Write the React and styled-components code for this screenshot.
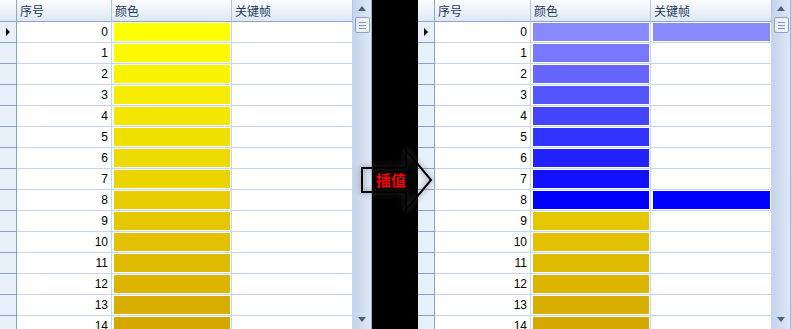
import React from 'react'
import styled, { createGlobalStyle } from 'styled-components'

const GlobalStyle = createGlobalStyle`
  html, body {
    margin: 0;
    padding: 0;
    background: #fff;
  }
  * { box-sizing: border-box; }
`

const Page = styled.div`
  position: relative;
  width: 791px;
  height: 329px;
  overflow: hidden;
  display: flex;
  font-family: "Liberation Sans", "Noto Sans CJK SC", sans-serif;
`

const Divider = styled.div`
  width: 46px;
  background: #000;
`

// Grid
const Grid = styled.div`
  width: ${p => p.$width}px;
  display: flex;
  background: #fff;
`

const Table = styled.div`
  flex: 1;
  display: flex;
  flex-direction: column;
`

const Row = styled.div`
  display: grid;
  grid-template-columns: 17px ${p => p.$first}px 120px 121px;
  height: ${p => p.$head ? 22 : 21}px;
  flex-shrink: 0;
`

const HeadCell = styled.div`
  background: linear-gradient(to bottom, #fbfcfe 0%, #eef3fa 45%, #dde8f5 100%);
  border-bottom: 1px solid #8fa6c6;
  border-right: 1px solid #b4c7de;
  color: #1e395b;
  font-family: "Noto Sans CJK SC", sans-serif;
  font-size: 12px;
  line-height: 21px;
  padding-left: 3px;
  white-space: nowrap;
  overflow: hidden;
`

const Corner = styled(HeadCell)`
  border-right: 1px solid #8fa6c6;
`

const RowHeader = styled.div`
  background: #e8f0fa;
  border-right: 1px solid #8aa2c4;
  border-bottom: 1px solid #8aa2c4;
  display: flex;
  align-items: center;
  padding-left: 6px;
`

const Pointer = styled.div`
  width: 0;
  height: 0;
  border-top: 4px solid transparent;
  border-bottom: 4px solid transparent;
  border-left: 4px solid #000;
`

const NumCell = styled.div`
  border-right: 1px solid #c5d7ef;
  border-bottom: 1px solid #c5d7ef;
  text-align: right;
  padding-right: 3px;
  font-size: 12px;
  line-height: 20px;
  color: #000;
`

const SwatchCell = styled.div`
  border-right: 1px solid #c5d7ef;
  border-bottom: 1px solid #c5d7ef;
  padding: 1px 1px 1px 2px;
`

const Swatch = styled.div`
  height: 100%;
  background: ${p => p.$color};
`

// Scrollbar
const Scrollbar = styled.div`
  width: 19px;
  background: linear-gradient(to right, #c4d4eb, #dfe8f5);
  border-right: 1px solid #9fb3cf;
  display: flex;
  flex-direction: column;
  align-items: center;
  justify-content: space-between;
  padding: 6px 0 7px 0;
  height: 329px;
`

const ArrowTri = styled.div`
  width: 0;
  height: 0;
  border-left: 4px solid transparent;
  border-right: 4px solid transparent;
  ${p => p.$up
    ? 'border-bottom: 5px solid #4b5f82;'
    : 'border-top: 5px solid #4b5f82;'}
`

const Top = styled.div`
  display: flex;
  flex-direction: column;
  align-items: center;
  gap: 6px;
`

const Thumb = styled.div`
  width: 15px;
  height: 16px;
  border: 1px solid #8ea3c3;
  border-radius: 2px;
  background: linear-gradient(to right, #e4ecf7, #f3f7fc);
  display: flex;
  flex-direction: column;
  align-items: center;
  justify-content: center;
  gap: 2px;
`

const Grip = styled.div`
  width: 7px;
  height: 1px;
  background: #8195b8;
`

// Center arrow badge (overlays the divider and both grids)
const Badge = styled.div`
  position: absolute;
  left: 355px;
  top: 140px;
  width: 90px;
  height: 80px;
  padding: 30px 0 0 21px;
`

const BadgeSvg = styled.svg`
  position: absolute;
  left: 0;
  top: 0;
  filter: drop-shadow(0 0 3px rgba(80, 80, 80, 0.75));
`

const BadgeLabel = styled.span`
  position: relative;
  color: #ff0000;
  font-family: "Noto Sans CJK SC", sans-serif;
  font-weight: bold;
  font-size: 15px;
  line-height: 20px;
`

const yellow = i => `rgb(${Math.round(255 - i * 3)}, ${Math.round(255 - i * 6.2)}, 0)`
const blue = i => {
  const v = Math.round(136 * (8 - i) / 8)
  return `rgb(${v}, ${v}, 255)`
}

const rows = Array.from({ length: 16 }, (_, i) => i)

const DataGrid = ({ width, first, colorOf, keyOf }) => (
  <Grid $width={width}>
    <Table>
      <Row $head $first={first}>
        <Corner />
        <HeadCell>序号</HeadCell>
        <HeadCell>颜色</HeadCell>
        <HeadCell>关键帧</HeadCell>
      </Row>
      {rows.map(i => (
        <Row key={i} $first={first}>
          <RowHeader>{i === 0 && <Pointer />}</RowHeader>
          <NumCell>{i}</NumCell>
          <SwatchCell><Swatch $color={colorOf(i)} /></SwatchCell>
          <SwatchCell>{keyOf(i) && <Swatch $color={keyOf(i)} />}</SwatchCell>
        </Row>
      ))}
    </Table>
    <Scrollbar>
      <Top>
        <ArrowTri $up />
        <Thumb>
          <Grip /><Grip /><Grip />
        </Thumb>
      </Top>
      <ArrowTri />
    </Scrollbar>
  </Grid>
)

const App = () => {
  const rightColor = i => (i <= 8 ? blue(i) : yellow(i))
  return (
    <>
      <GlobalStyle />
      <Page>
        <DataGrid width={372} first={95} colorOf={yellow} keyOf={() => null} />
        <Divider />
        <DataGrid
          width={373}
          first={96}
          colorOf={rightColor}
          keyOf={i => (i === 0 || i === 8 ? blue(i) : null)}
        />
        <Badge>
          <BadgeSvg width="90" height="80" viewBox="0 0 90 80">
            <polygon
              points="7,28 51,28 51,10 76,40 51,70 51,52 7,52"
              fill="none"
              stroke="#000"
              strokeWidth="2"
              strokeLinejoin="miter"
            />
          </BadgeSvg>
          <BadgeLabel>插值</BadgeLabel>
        </Badge>
      </Page>
    </>
  )
}

export default App
